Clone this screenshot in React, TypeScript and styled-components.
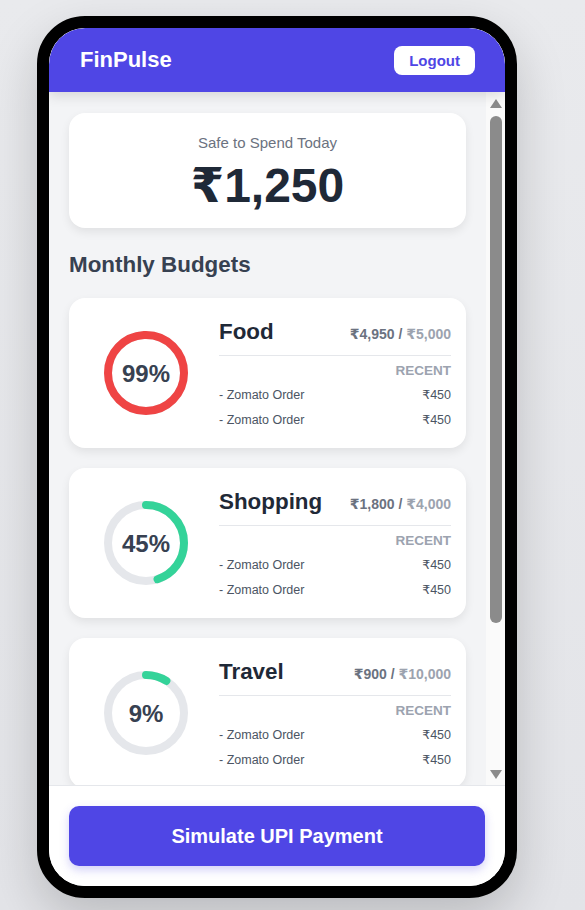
import React from "react";
import styled, { createGlobalStyle } from "styled-components";

const GlobalStyle = createGlobalStyle`
  html, body {
    margin: 0;
    padding: 0;
    background: #e5e7eb;
    font-family: "Liberation Sans", Arial, "DejaVu Sans", sans-serif;
  }
  * { box-sizing: border-box; }
`;

const Page = styled.div`
  min-height: 910px;
  padding: 16px 0 0 37px;
  background: linear-gradient(180deg, #e9eaed 0%, #e3e4e8 100%);
`;

const Phone = styled.div`
  width: 480px;
  height: 882px;
  border: 12px solid #000;
  border-radius: 48px;
  background: #fff;
  box-shadow: 0 20px 50px rgba(0, 0, 0, 0.18);
  overflow: hidden;
`;

const Screen = styled.div`
  height: 100%;
  border-radius: 36px;
  overflow: hidden;
  display: flex;
  flex-direction: column;
  background: #f3f4f6;
`;

const Header = styled.header`
  flex: 0 0 64px;
  display: flex;
  align-items: center;
  justify-content: space-between;
  padding: 0 30px 0 31px;
  background: #4f46e5;
  box-shadow: 0 4px 12px rgba(0, 0, 0, 0.12);
  position: relative;
  z-index: 1;
`;

const Brand = styled.div`
  color: #fff;
  font-size: 22px;
  font-weight: 700;
`;

const LogoutButton = styled.button`
  border: none;
  background: #fff;
  color: #4f46e5;
  font-family: inherit;
  font-size: 15px;
  font-weight: 700;
  padding: 0 15px;
  height: 29px;
  border-radius: 8px;
`;

const Body = styled.div`
  flex: 1;
  min-height: 0;
  display: flex;
`;

const Content = styled.main`
  flex: 1;
  min-width: 0;
  overflow: hidden;
  padding: 21px 20px 20px 20px;
`;

const ScrollTrack = styled.div`
  flex: 0 0 19px;
  display: flex;
  flex-direction: column;
  align-items: center;
  padding: 7px 0 6px;
  background: #fafafa;
`;

const Arrow = styled.div<{ $down?: boolean }>`
  width: 0;
  height: 0;
  border-left: 6.5px solid transparent;
  border-right: 6.5px solid transparent;
  ${(p) =>
    p.$down
      ? "border-top: 9px solid #8b8b8b; margin-top: auto;"
      : "border-bottom: 9px solid #8b8b8b;"}
`;

const Thumb = styled.div`
  margin-top: 8px;
  width: 12px;
  height: 507px;
  border-radius: 6px;
  background: #8b8b8b;
`;

const SummaryCard = styled.section`
  background: #fff;
  border-radius: 16px;
  box-shadow: 0 4px 10px rgba(0, 0, 0, 0.08);
  padding: 21px 20px 14px;
  text-align: center;
`;

const SummaryLabel = styled.div`
  color: #6b7280;
  font-size: 15px;
  line-height: 18px;
`;

const SummaryAmount = styled.div`
  margin-top: 6px;
  color: #1f2937;
  font-size: 48px;
  line-height: 56px;
  font-weight: 700;
`;

const SectionTitle = styled.h2`
  margin: 23px 0 19px;
  color: #374151;
  font-size: 22.4px;
  line-height: 28px;
  font-weight: 700;
`;

const CardList = styled.div`
  display: flex;
  flex-direction: column;
  gap: 20px;
`;

const BudgetCard = styled.article`
  height: 150px;
  flex: 0 0 150px;
  background: #fff;
  border-radius: 16px;
  box-shadow: 0 4px 10px rgba(0, 0, 0, 0.08);
  padding: 21px 15px 18px 35px;
  display: flex;
  align-items: center;
  gap: 31px;
`;

const RingWrap = styled.div`
  position: relative;
  width: 84px;
  height: 84px;
  flex: 0 0 84px;
  margin-top: -4px;
`;

const RingLabel = styled.div`
  position: absolute;
  inset: 0;
  padding-top: 3px;
  display: flex;
  align-items: center;
  justify-content: center;
  color: #374151;
  font-size: 24px;
  font-weight: 700;
`;

const Details = styled.div`
  flex: 1;
  align-self: stretch;
  display: flex;
  flex-direction: column;
`;

const TitleRow = styled.div`
  display: flex;
  align-items: baseline;
  justify-content: space-between;
  padding-bottom: 10px;
  border-bottom: 1px solid #e5e7eb;
`;

const CategoryName = styled.h3`
  margin: 0;
  color: #1f2937;
  font-size: 22.4px;
  line-height: 26px;
  font-weight: 700;
`;

const Spent = styled.span`
  color: #6b7280;
  font-size: 14px;
  font-weight: 700;
`;

const Limit = styled.span`
  color: #9ca3af;
`;

const RecentLabel = styled.div`
  margin-top: 6px;
  text-align: right;
  color: #9ca3af;
  font-size: 13.5px;
  line-height: 17px;
  font-weight: 700;
  text-transform: uppercase;
`;

const TxRow = styled.div`
  margin-top: 8px;
  display: flex;
  justify-content: space-between;
  color: #4b5563;
  font-size: 12.5px;
  line-height: 17px;
`;

const Footer = styled.footer`
  flex: 0 0 100px;
  background: #fff;
  border-top: 1px solid #e5e7eb;
  padding: 20px;
  position: relative;
  z-index: 1;
`;

const PayButton = styled.button`
  width: 100%;
  height: 60px;
  border: none;
  border-radius: 10px;
  background: #4f46e5;
  color: #fff;
  font-family: inherit;
  font-size: 20px;
  font-weight: 700;
  box-shadow: 0 4px 10px rgba(79, 70, 229, 0.25);
`;

type Budget = {
  name: string;
  spent: string;
  limit: string;
  pct: number;
};

const budgets: Budget[] = [
  { name: "Food", spent: "₹4,950", limit: "₹5,000", pct: 99 },
  { name: "Shopping", spent: "₹1,800", limit: "₹4,000", pct: 45 },
  { name: "Travel", spent: "₹900", limit: "₹10,000", pct: 9 },
];

const R = 38;
const C = 2 * Math.PI * R;

function Ring({ pct }: { pct: number }) {
  const color = pct >= 90 ? "#ef4444" : "#34d399";
  return (
    <RingWrap>
      <svg width="84" height="84" viewBox="0 0 84 84">
        <circle cx="42" cy="42" r={R} fill="none" stroke="#e5e7eb" strokeWidth="8" />
        <circle
          cx="42"
          cy="42"
          r={R}
          fill="none"
          stroke={color}
          strokeWidth="8"
          strokeLinecap="round"
          strokeDasharray={C}
          strokeDashoffset={C * (1 - pct / 100)}
          transform="rotate(-90 42 42)"
        />
      </svg>
      <RingLabel>{pct}%</RingLabel>
    </RingWrap>
  );
}

export default function App() {
  return (
    <>
      <GlobalStyle />
      <Page>
        <Phone>
          <Screen>
            <Header>
              <Brand>FinPulse</Brand>
              <LogoutButton>Logout</LogoutButton>
            </Header>
            <Body>
              <Content>
                <SummaryCard>
                  <SummaryLabel>Safe to Spend Today</SummaryLabel>
                  <SummaryAmount>₹1,250</SummaryAmount>
                </SummaryCard>
                <SectionTitle>Monthly Budgets</SectionTitle>
                <CardList>
                  {budgets.map((b) => (
                    <BudgetCard key={b.name}>
                      <Ring pct={b.pct} />
                      <Details>
                        <TitleRow>
                          <CategoryName>{b.name}</CategoryName>
                          <Spent>
                            {b.spent} / <Limit>{b.limit}</Limit>
                          </Spent>
                        </TitleRow>
                        <RecentLabel>Recent</RecentLabel>
                        <TxRow>
                          <span>- Zomato Order</span>
                          <span>₹450</span>
                        </TxRow>
                        <TxRow>
                          <span>- Zomato Order</span>
                          <span>₹450</span>
                        </TxRow>
                      </Details>
                    </BudgetCard>
                  ))}
                </CardList>
              </Content>
              <ScrollTrack>
                <Arrow />
                <Thumb />
                <Arrow $down />
              </ScrollTrack>
            </Body>
            <Footer>
              <PayButton>Simulate UPI Payment</PayButton>
            </Footer>
          </Screen>
        </Phone>
      </Page>
    </>
  );
}
